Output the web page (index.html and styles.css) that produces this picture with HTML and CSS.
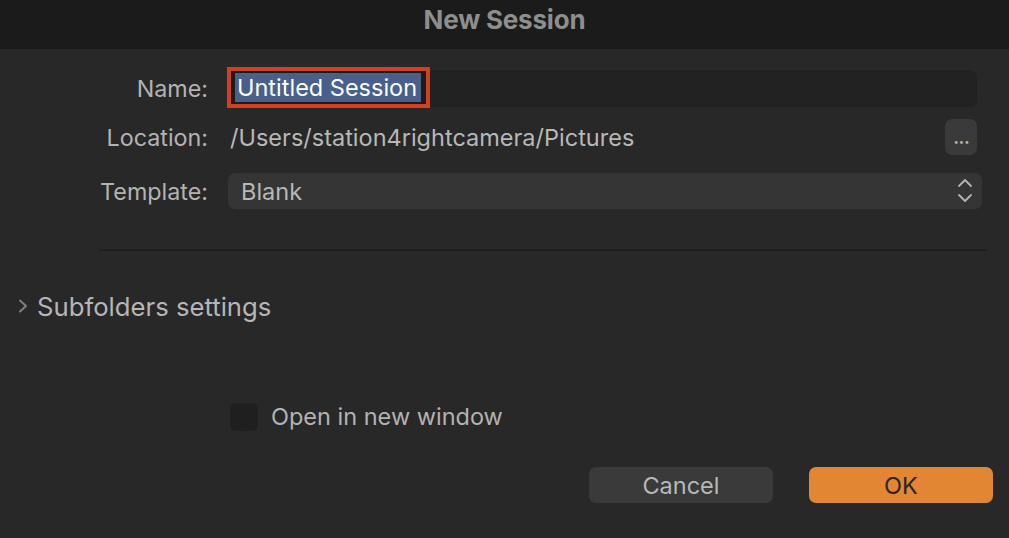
FILE: index.html
```html
<!DOCTYPE html>
<html>
<head>
<meta charset="utf-8">
<link rel="stylesheet" href="styles.css">
</head>
<body>
<div class="window">
  <div class="titlebar">New Session</div>
  <div class="form">
    <div class="row row-name">
      <div class="label">Name:</div>
      <div class="field name-field">
        <div class="highlight"><span class="selection">Untitled Session</span></div>
      </div>
    </div>
    <div class="row row-location">
      <div class="label">Location:</div>
      <div class="location">
        <span class="path">/Users/station4rightcamera/Pictures</span>
        <button class="dots">&middot;&middot;&middot;</button>
      </div>
    </div>
    <div class="row row-template">
      <div class="label">Template:</div>
      <div class="popup">
        <span>Blank</span>
        <svg class="updown" width="16" height="26" viewBox="0 0 16 26">
          <polyline points="2,8 8,2 14,8" fill="none" stroke="#b4b4b4" stroke-width="1.8" stroke-linecap="round" stroke-linejoin="round"/>
          <polyline points="2,17 8,23 14,17" fill="none" stroke="#b4b4b4" stroke-width="1.8" stroke-linecap="round" stroke-linejoin="round"/>
        </svg>
      </div>
    </div>
  </div>
  <div class="divider"></div>
  <div class="disclosure">
    <svg class="chev" width="10" height="14" viewBox="0 0 10 14">
      <polyline points="2,1.5 8,7 2,12.5" fill="none" stroke="#808080" stroke-width="2" stroke-linecap="round" stroke-linejoin="round"/>
    </svg>
    <span>Subfolders settings</span>
  </div>
  <div class="checkrow">
    <div class="checkbox"></div>
    <span>Open in new window</span>
  </div>
  <div class="buttons">
    <button class="btn cancel">Cancel</button>
    <button class="btn ok">OK</button>
  </div>
</div>
</body>
</html>
```
FILE: styles.css
```css
html, body {
  margin: 0;
  padding: 0;
  background: #282828;
}
body {
  width: 1009px;
  height: 538px;
  overflow: hidden;
  font-family: Inter, "Noto Sans", sans-serif;
  color: #b8b8b8;
}
.window {
  display: flex;
  flex-direction: column;
}
.titlebar {
  height: 49px;
  background: #1b1b1b;
  color: #8e8e8e;
  font-weight: 700;
  font-size: 26px;
  line-height: 40px;
  text-align: center;
  letter-spacing: -0.2px;
}
.form {
  display: flex;
  flex-direction: column;
  padding-top: 19px;
}
.row {
  display: grid;
  grid-template-columns: 208px 1fr;
  column-gap: 20px;
  align-items: center;
}
.label {
  text-align: right;
  font-size: 23.3px;
  color: #b3b3b3;
}
.row-name {
  height: 41px;
  padding-right: 32px;
}
.name-field {
  height: 37px;
  background: #212121;
  border-radius: 7px;
  position: relative;
  display: flex;
  align-items: center;
}
.highlight {
  position: absolute;
  left: -1px;
  top: -3px;
  box-sizing: border-box;
  width: 203px;
  height: 41px;
  border: 4px solid #d4401f;
  background: #1c1c1c;
  padding: 2px 5px 2px 4px;
  display: flex;
}
.selection {
  flex: 1;
  background: #48608a;
  color: #ffffff;
  font-size: 23.5px;
  line-height: 29px;
  padding-left: 2px;
  white-space: nowrap;
}
.row-location {
  margin-top: 10px;
  height: 36px;
  padding-right: 32px;
}
.location {
  display: flex;
  align-items: center;
  justify-content: space-between;
  height: 36px;
  padding-left: 2px;
}
.path {
  font-size: 23.5px;
  color: #b8b8b8;
}
.dots {
  width: 32px;
  height: 36px;
  border: none;
  border-radius: 7px;
  background: #3a3a3a;
  color: #b0b0b0;
  font-size: 22px;
  font-family: Inter, sans-serif;
  padding: 10px 0 0 0;
  line-height: 20px;
  letter-spacing: -1px;
}
.row-template {
  margin-top: 18px;
  height: 36px;
  padding-right: 27px;
}
.popup {
  height: 36px;
  background: #353535;
  border-radius: 7px;
  display: flex;
  align-items: center;
  justify-content: space-between;
  padding: 0 9px 0 13px;
  font-size: 23.5px;
  color: #b8b8b8;
}
.updown {
  display: block;
}
.divider {
  margin: 40px 22px 0 99px;
  height: 2px;
  background: #1f1f1f;
}
.disclosure {
  display: flex;
  align-items: center;
  margin-top: 42px;
  padding-left: 18px;
  height: 26px;
  font-size: 25.7px;
  color: #b6b6b6;
}
.chev {
  margin-right: 9px;
}
.checkrow {
  display: flex;
  align-items: center;
  margin-top: 83px;
  padding-left: 230px;
  font-size: 23.5px;
  color: #b3b3b3;
}
.checkbox {
  width: 28px;
  height: 28px;
  background: #1f1f1f;
  border-radius: 5px;
  margin-right: 13px;
}
.buttons {
  display: flex;
  justify-content: flex-end;
  gap: 36px;
  margin-top: 36px;
  padding-right: 16px;
}
.btn {
  width: 184px;
  height: 36px;
  border: none;
  border-radius: 7px;
  font-family: Inter, sans-serif;
  font-size: 23.5px;
  padding: 0;
}
.cancel {
  background: #3a3a3a;
  color: #b8b8b8;
}
.ok {
  background: #e38633;
  color: #262626;
}
```
